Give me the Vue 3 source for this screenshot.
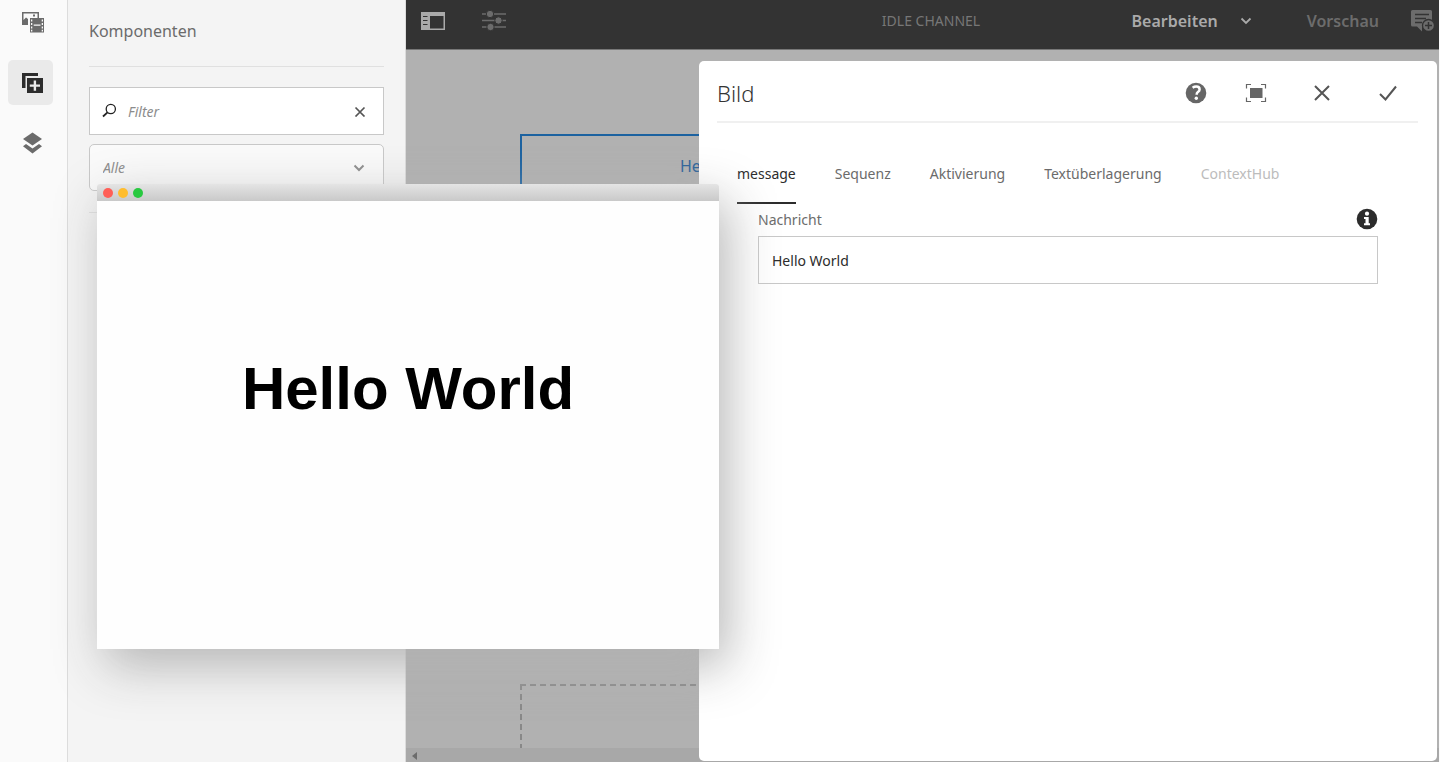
<script setup>
import { ref } from 'vue'

const filter = ref('')
const message = ref('Hello World')
const activeTab = ref('message')
const tabs = [
  { name: 'message' },
  { name: 'Sequenz' },
  { name: 'Aktivierung' },
  { name: 'Textüberlagerung' },
  { name: 'ContextHub', disabled: true },
]
</script>

<template>
  <div class="editor">
    <nav class="rail" aria-label="Seitenbereich">
      <button class="rail-btn" type="button" aria-label="Assets">
        <svg width="24" height="24" viewBox="0 0 24 24">
          <path fill="#6b6b6b" d="M1 1h17v6h-1.500V2.500h-14V9L5 6.500l2 1.500V14H1z" />
          <rect x="12" y="3.500" width="2" height="2" fill="#6b6b6b" />
          <path fill="#6b6b6b" fill-rule="evenodd" d="M9 7h14v14.500H9zM10 8.500v2h1.300v-2zM10 12v2h1.300v-2zM10 15.500v2h1.300v-2zM10 18.700v1.800h1.300v-1.800zM20.700 8.500v2H22v-2zM20.700 12v2H22v-2zM20.700 15.500v2H22v-2zM20.700 18.700v1.800H22v-1.800zM12.700 13.500v1.200h6.800v-1.200z" />
        </svg>
      </button>
      <button class="rail-btn active" type="button" aria-label="Komponenten">
        <svg width="24" height="24" viewBox="0 0 24 24">
          <path fill="#2c2c2c" d="M1 2h16v3H4.500v12H1z" />
          <path fill="#2c2c2c" fill-rule="evenodd" d="M6 7h16v15H6zM12.700 9.500v4H8.800v2.200h3.900v4h2.400v-4H19v-2.200h-3.900v-4z" />
        </svg>
      </button>
      <button class="rail-btn" type="button" aria-label="Inhaltsbaum">
        <svg width="24" height="24" viewBox="0 0 24 24">
          <path fill="#6b6b6b" d="M11.500 1.500 21 8l-9.500 6.500L2 8z" />
          <path fill="#6b6b6b" d="m5 13 6.500 4.500L18 13l3 2.200-9.500 7.300L2 15.200z" />
        </svg>
      </button>
    </nav>

    <aside class="panel">
      <h2 class="panel-title">Komponenten</h2>
      <div class="filter">
        <svg width="16" height="16" viewBox="0 0 16 16" fill="none" stroke="#222">
          <circle cx="8.800" cy="6" r="4.600" stroke-width="1.300" />
          <path d="M5.500 9.300 1 13.500" stroke-width="1.800" />
        </svg>
        <input v-model="filter" type="text" placeholder="Filter" aria-label="Filter" />
        <button type="button" aria-label="Filter löschen" @click="filter = ''">
          <svg width="12" height="12" viewBox="0 0 12 12" fill="none" stroke="#555" stroke-width="1.700">
            <path d="m1.500 2.500 9 9M10.500 2.500l-9 9" />
          </svg>
        </button>
      </div>
      <div class="group">
        <select aria-label="Komponentengruppe">
          <option>Alle</option>
        </select>
        <svg width="12" height="8" viewBox="0 0 12 8" fill="none" stroke="#8c8c8c" stroke-width="2">
          <path d="m1.500 1.500 4.500 4.500 4.500-4.500" />
        </svg>
      </div>
      <hr />
    </aside>

    <main class="stage">
      <header class="topbar">
        <div class="tools">
          <button type="button" aria-label="Seitenbereich ein/aus">
            <svg width="24" height="24" viewBox="0 0 24 24">
              <path fill="#aaa" fill-rule="evenodd" d="M0 3h24v18H0zM9 7v12.500h13.500V7z" />
              <path d="M2 7.500h4.500M2 11.500h4.500M2 15.500h4.500" stroke="#333" stroke-width="1.200" />
            </svg>
          </button>
          <button type="button" aria-label="Seiteninformationen">
            <svg width="24" height="24" viewBox="0 0 24 24" fill="#6c6c6c">
              <path d="M0 5h24M0 11.500h24M0 18h24" stroke="#6c6c6c" stroke-width="1.600" />
              <g stroke="#333">
                <circle cx="8" cy="5" r="3.700" />
                <circle cx="16.500" cy="11.500" r="3.700" />
                <circle cx="8.500" cy="18" r="3.700" />
              </g>
            </svg>
          </button>
        </div>
        <h1 class="page-title">IDLE CHANNEL</h1>
        <div class="modes">
          <button class="mode edit" type="button">
            Bearbeiten
            <svg width="12" height="8" viewBox="0 0 12 8" fill="none" stroke="#aaa" stroke-width="1.800">
              <path d="m1.500 1.500 4.500 4.500 4.500-4.500" />
            </svg>
          </button>
          <button class="mode" type="button">Vorschau</button>
          <button type="button" aria-label="Anmerkung hinzufügen">
            <svg width="24" height="24" viewBox="0 0 24 24">
              <path fill="#6c6c6c" d="M1.500 1h18Q21 1 21 2.500v15H11v5L6 17.500H1.500Q0 17.500 0 16V2.500Q0 1 1.500 1z" />
              <path d="M4 5.500h14M4 9.500h11M4 13.500h7" stroke="#333" stroke-width="1.500" />
              <circle cx="17.500" cy="16.500" r="6" fill="#6c6c6c" stroke="#333" stroke-width="1.300" />
              <path d="M17.500 13v7M14 16.500h7" stroke="#333" stroke-width="1.500" />
            </svg>
          </button>
        </div>
      </header>

      <div class="canvas">
        <div class="selected">Hello World</div>
        <div class="dropzone"></div>
      </div>
      <div class="scrollbar">
        <svg width="5" height="8" viewBox="0 0 5 8"><path d="M5 0v8L0 4z" fill="#6c6c6c" /></svg>
      </div>

      <form class="dialog" aria-label="Bild" @submit.prevent>
        <header class="dialog-head">
          <h2>Bild</h2>
          <button type="button" aria-label="Hilfe">
            <svg width="22" height="22" viewBox="0 0 22 22">
              <circle cx="11" cy="11" r="10.300" fill="#666" />
              <path d="M7.600 5.800q1.600-1.200 3.700-1.200 3.300 0 3.300 2.800 0 1.400-1.700 2.700-1.200.9-1.200 2.100v.6" fill="none" stroke="#fff" stroke-width="2.500" />
              <circle cx="11.300" cy="16.200" r="1.700" fill="#fff" />
            </svg>
          </button>
          <button type="button" aria-label="Vollbild">
            <svg width="22" height="22" viewBox="0 0 22 22">
              <rect x="5" y="6" width="12.500" height="10" fill="#666" />
              <path d="M1.500 6.500V2.500H6M16 2.500h4.500v4M20.500 15.500v4H16M6 19.500H1.500v-4" fill="none" stroke="#666" stroke-width="1.200" />
            </svg>
          </button>
          <button type="button" aria-label="Abbrechen">
            <svg width="22" height="22" viewBox="0 0 22 22" fill="none" stroke="#555" stroke-width="2">
              <path d="m4 4 14 14M18 4 4 18" />
            </svg>
          </button>
          <button type="submit" aria-label="Fertig">
            <svg width="22" height="22" viewBox="0 0 22 22" fill="none" stroke="#555" stroke-width="2">
              <path d="m3 12 5.500 5.500L19 4.500" />
            </svg>
          </button>
        </header>

        <div class="tabs" role="tablist">
          <button
            v-for="tab in tabs"
            :key="tab.name"
            type="button"
            role="tab"
            :class="{ current: tab.name === activeTab }"
            :aria-selected="tab.name === activeTab"
            :disabled="tab.disabled"
            @click="activeTab = tab.name"
          >{{ tab.name }}</button>
        </div>

        <div class="field">
          <div class="field-head">
            <label for="message">Nachricht</label>
            <button type="button" aria-label="Information">
              <svg width="22" height="22" viewBox="0 0 22 22">
                <circle cx="11" cy="11" r="10.300" fill="#2c2c2c" />
                <circle cx="11" cy="5.700" r="2.100" fill="#fff" />
                <path d="M8 9h4.700v6.300H14v2H8v-2h1.500V11H8z" fill="#fff" />
              </svg>
            </button>
          </div>
          <input id="message" v-model="message" type="text" />
        </div>
      </form>
    </main>

    <section class="window" aria-label="Vorschaufenster">
      <div class="titlebar">
        <button class="red" type="button" aria-label="Schließen"></button>
        <button class="yellow" type="button" aria-label="Minimieren"></button>
        <button class="green" type="button" aria-label="Maximieren"></button>
      </div>
      <p class="greeting">Hello World</p>
    </section>
  </div>
</template>

<style>
body {
  margin: 0;
}
</style>

<style scoped>
.editor {
  position: relative;
  display: grid;
  grid-template-columns: 68px 338px 1fr;
  height: 100vh;
  overflow: hidden;
  font-family: "Noto Sans", "Open Sans", sans-serif;
  font-size: 14px;
  color: #6b6b6b;
}
* {
  box-sizing: border-box;
}
button,
input,
select {
  font: inherit;
  color: inherit;
}
button {
  display: flex;
  align-items: center;
  padding: 0;
  border: 0;
  background: none;
}
svg {
  display: block;
  flex: none;
}
.rail {
  display: flex;
  flex-direction: column;
  gap: 15px;
  padding-left: 8px;
  background: #fafafa;
  border-right: 1px solid #dcdcdc;
}
.rail-btn {
  justify-content: center;
  width: 45px;
  height: 45px;
  padding-left: 4px;
  border-radius: 5px;
}
.rail-btn.active {
  background: #eaeaea;
}
.panel {
  padding: 0 21px;
  background: #f4f4f4;
  border-right: 1px solid #dcdcdc;
}
.panel-title {
  height: 67px;
  margin: 0 0 20px;
  padding-top: 19px;
  border-bottom: 1px solid #e0e0e0;
  font-size: 16px;
  line-height: 24px;
  font-weight: 400;
}
.filter {
  display: flex;
  align-items: center;
  height: 48px;
  padding: 0 17px 0 12px;
  background: #fff;
  border: 1px solid #c8c8c8;
}
.filter input {
  flex: 1;
  min-width: 0;
  padding: 0 0 0 10px;
  border: 0;
  outline: 0;
  background: none;
  font-style: italic;
}
.filter input::placeholder {
  color: #8c8c8c;
}
.group {
  display: flex;
  align-items: center;
  height: 47px;
  margin: 9px 0 21px;
  padding-right: 18px;
  border: 1px solid #c8c8c8;
  border-radius: 5px;
  background: #fafafa;
}
.group select {
  flex: 1;
  height: 100%;
  padding: 0 13px;
  border: 0;
  background: none;
  appearance: none;
  font-style: italic;
  color: #8c8c8c;
}
.panel hr {
  margin: 0;
  border: 0;
  border-top: 1px solid #e0e0e0;
}
.stage {
  position: relative;
  display: flex;
  flex-direction: column;
  min-width: 0;
  border-right: 1px solid #fafafa;
  background: #b1b1b1;
}
.topbar {
  display: flex;
  align-items: center;
  height: 50px;
  padding: 0 4px 8px 15px;
  background: #333;
  border-bottom: 1px solid #777;
}
.tools {
  flex: 1;
  display: flex;
  gap: 37px;
}
.page-title {
  margin: 0;
  padding-left: 6px;
  font-size: 14px;
  font-weight: 400;
  color: #777;
}
.modes {
  flex: 1;
  display: flex;
  align-items: center;
  justify-content: flex-end;
  gap: 32px;
}
.mode {
  font-size: 16px;
  font-weight: 600;
  color: #6c6c6c;
}
.mode.edit {
  gap: 22px;
  margin-right: 23px;
  color: #aaa;
}
.canvas {
  flex: 1;
  display: flex;
  flex-direction: column;
  justify-content: space-between;
  padding: 84px 740px 0 114px;
}
.selected {
  height: 480px;
  padding: 18px 0 0 158px;
  overflow: hidden;
  border: 2px solid #1c62a0;
  border-right: 0;
  font-size: 16px;
  line-height: 24px;
  white-space: nowrap;
  color: #2c639a;
}
.dropzone {
  height: 64px;
  background:
    repeating-linear-gradient(90deg, #888 0 6px, transparent 6px 10px) top / 100% 2px no-repeat,
    repeating-linear-gradient(180deg, #888 0 6px, transparent 6px 10px) left / 2px 100% no-repeat;
}
.scrollbar {
  display: flex;
  align-items: center;
  height: 14px;
  padding: 2px 6px 0;
  background: #a8a8a8;
}
.dialog {
  position: absolute;
  top: 61px;
  right: 2px;
  bottom: 1px;
  left: 293px;
  padding: 0 19px 0 18px;
  border-radius: 5px;
  background: #fff;
}
.dialog-head {
  display: flex;
  align-items: center;
  height: 62px;
  padding: 4px 19px 0 0;
  border-bottom: 2px solid #f0f0f0;
}
.dialog-head h2 {
  flex: 1;
  margin: 0;
  font-size: 22px;
  line-height: 30px;
  font-weight: 300;
  color: #333;
}
.dialog-head button {
  margin-left: 44px;
}
.dialog-head button:nth-of-type(2) {
  margin-left: 38px;
}
.tabs {
  display: flex;
  gap: 39px;
  padding: 20px 20px 0;
}
.tabs button {
  height: 61px;
  padding-top: 2px;
  border-bottom: 2px solid transparent;
}
.tabs .current {
  border-color: #2c2c2c;
  color: #2c2c2c;
}
.tabs button:disabled {
  color: #bcbcbc;
}
.field {
  padding: 4px 40px 0 41px;
}
.field-head {
  display: flex;
  align-items: center;
  justify-content: space-between;
  height: 22px;
  margin-bottom: 6px;
}
.field input {
  width: 100%;
  height: 48px;
  padding: 0 13px;
  border: 1px solid #c8c8c8;
  outline: 0;
  color: #2c2c2c;
}
.window {
  position: absolute;
  top: 184px;
  left: 97px;
  display: flex;
  flex-direction: column;
  width: 622px;
  height: 465px;
  border-radius: 3px 3px 0 0;
  background: #fefefe;
  box-shadow: 8px 17px 50px rgba(178, 178, 178, 0.95);
}
.titlebar {
  display: flex;
  align-items: center;
  gap: 5px;
  height: 17px;
  padding-left: 6px;
  border-radius: 3px 3px 0 0;
  background: linear-gradient(#e4e4e4, #c9c9c9);
}
.titlebar button {
  width: 10px;
  height: 10px;
  border-radius: 50%;
}
.titlebar .red {
  background: #ff5f57;
}
.titlebar .yellow {
  background: #ffbd2e;
}
.titlebar .green {
  background: #28c940;
}
.greeting {
  margin: 0;
  padding-top: 153px;
  font-family: "Liberation Sans", Arial, sans-serif;
  font-size: 60px;
  line-height: 70px;
  font-weight: 700;
  text-align: center;
  color: #000;
}
</style>
